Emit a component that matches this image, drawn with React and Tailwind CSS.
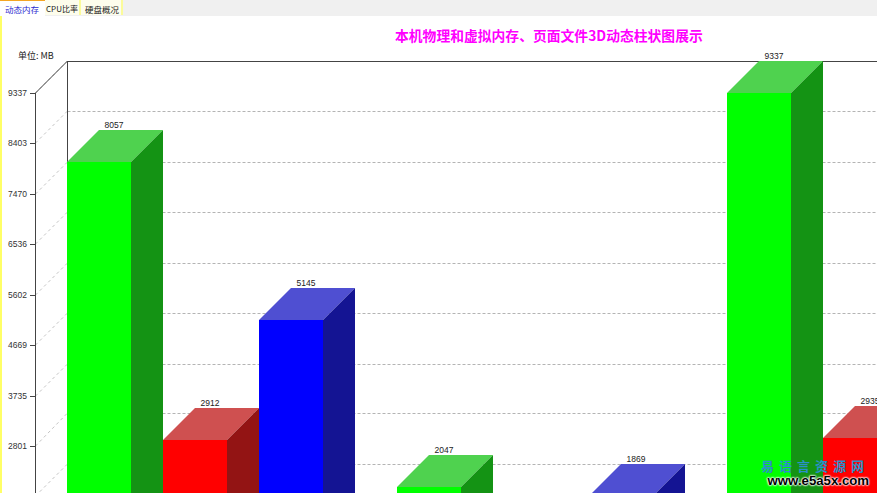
const TICKS = [
  { label: '9337', y: 93, grid: 61 },
  { label: '8403', y: 143, grid: 111 },
  { label: '7470', y: 194, grid: 162 },
  { label: '6536', y: 244, grid: 212 },
  { label: '5602', y: 295, grid: 263 },
  { label: '4669', y: 345, grid: 313 },
  { label: '3735', y: 396, grid: 364 },
  { label: '2801', y: 446, grid: 413 },
  { label: '', y: 496, grid: 464 },
]

const BARS = [
  { x: 67, y: 162, value: '8057', front: '#00ff00', top: '#4fd24f', side: '#149314' },
  { x: 163, y: 440, value: '2912', front: '#ff0000', top: '#cf5050', side: '#931414' },
  { x: 259, y: 320, value: '5145', front: '#0000ff', top: '#4f4fd2', side: '#141493' },
  { x: 397, y: 487, value: '2047', front: '#00ff00', top: '#4fd24f', side: '#149314' },
  { x: 589, y: 496, value: '1869', front: '#0000ff', top: '#4f4fd2', side: '#141493' },
  { x: 727, y: 93, value: '9337', front: '#00ff00', top: '#4fd24f', side: '#149314' },
  { x: 823, y: 438, value: '2935', front: '#ff0000', top: '#cf5050', side: '#931414' },
]

const W = 64
const D = 32
const BOTTOM = 493

function Chart() {
  return (
    <svg width="875" height="477" viewBox="2 16 875 477" className="block">
      <text x="18" y="59" fontSize="9" fill="#222" fontFamily="'Noto Sans CJK SC', sans-serif">单位: MB</text>

      {TICKS.map((t) => (
        <g key={t.y}>
          <line x1="35.5" y1={t.y} x2="67.5" y2={t.grid} stroke="#c4c4c4" strokeDasharray="3 3" />
          {t.grid > 61 && (
            <line x1="67.5" y1={t.grid + 0.5} x2="877" y2={t.grid + 0.5} stroke="#b4b4b4" strokeDasharray="3 2" />
          )}
          <line x1="30" y1={t.y + 0.5} x2="35" y2={t.y + 0.5} stroke="#444" />
          <text x="27" y={t.y + 3} textAnchor="end" fontSize="8.5" fill="#333" fontFamily="'Liberation Sans', sans-serif">{t.label}</text>
        </g>
      ))}

      <line x1="35.5" y1="93" x2="67.5" y2="61" stroke="#444" />
      <line x1="35.5" y1="93" x2="35.5" y2={BOTTOM} stroke="#444" />
      <line x1="67.5" y1="61" x2="67.5" y2={BOTTOM} stroke="#444" />
      <line x1="67" y1="61.5" x2="877" y2="61.5" stroke="#444" />

      {BARS.map((b) => (
        <g key={b.value}>
          <rect x={b.x} y={b.y} width={W} height={Math.max(BOTTOM - b.y, 0)} fill={b.front} />
          <polygon points={`${b.x},${b.y} ${b.x + D},${b.y - D} ${b.x + W + D},${b.y - D} ${b.x + W},${b.y}`} fill={b.top} />
          <polygon points={`${b.x + W},${b.y} ${b.x + W + D},${b.y - D} ${b.x + W + D},${BOTTOM} ${b.x + W},${BOTTOM}`} fill={b.side} />
          <text x={b.x + 47} y={b.y - D - 2} textAnchor="middle" fontSize="8.5" fill="#222" fontFamily="'Liberation Sans', sans-serif">{b.value}</text>
        </g>
      ))}

      <text x="395" y="41" fontSize="13.8" fontWeight="700" fill="#ff00ff" fontFamily="'Noto Sans CJK SC', sans-serif">本机物理和虚拟内存、页面文件3D动态柱状图展示</text>
    </svg>
  )
}

export default function App() {
  return (
    <div className="relative h-[493px] w-[877px] overflow-hidden bg-white font-['Noto_Sans_CJK_SC',sans-serif]">
      <div className="flex h-4 items-start whitespace-nowrap bg-[#f0f0f0] text-[8.5px] leading-[18px] text-[#222]">
        <div className="h-4 w-[45px] border-t border-[#f5a623] bg-white pl-[5px] leading-[17px] text-[#2a2ad0]">动态内存</div>
        <div className="h-[15px] w-[36px] border-r-2 border-[#fbfb9a] bg-[#fdfdec] pl-[1px] text-[8px]">CPU比率</div>
        <div className="h-[15px] w-[42px] border-r-2 border-[#fbfb9a] bg-[#fdfdec] pl-[4px]">硬盘概况</div>
      </div>
      <div className="border-l-2 border-[#ffff66]">
        <Chart />
      </div>
      <div className="absolute bottom-[6px] right-[8px] flex flex-col items-end gap-[2px] leading-none">
        <div className="text-[13px] font-bold tracking-[5px] text-[#2b8fc9]">易语言资源网</div>
        <div className="font-['Liberation_Sans',sans-serif] text-[13.2px] font-bold text-black [text-shadow:0_0_2px_#fff,0_0_2px_#fff,0_0_2px_#fff,0_0_2px_#fff]">www.e5a5x.com</div>
      </div>
    </div>
  )
}
